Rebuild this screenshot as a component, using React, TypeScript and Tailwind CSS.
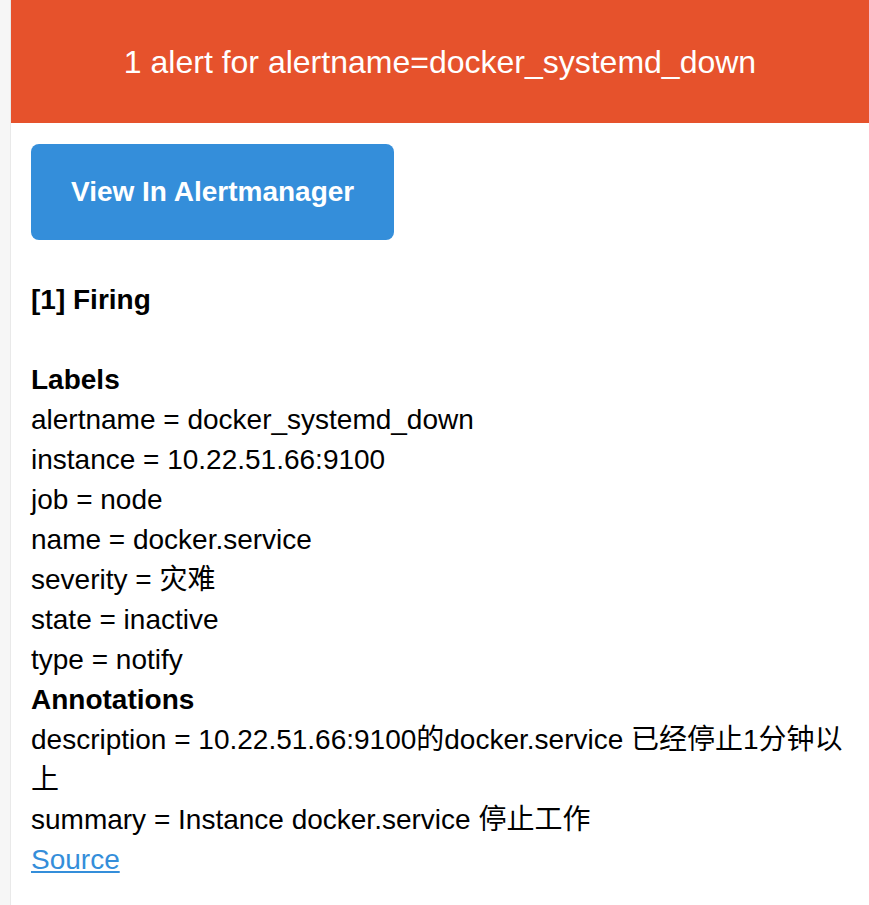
const labels = [
  "alertname = docker_systemd_down",
  "instance = 10.22.51.66:9100",
  "job = node",
  "name = docker.service",
  "severity = 灾难",
  "state = inactive",
  "type = notify",
];

const annotations = [
  "description = 10.22.51.66:9100的docker.service 已经停止1分钟以上",
  "summary = Instance docker.service 停止工作",
];

export default function App() {
  return (
    <div
      className="flex min-h-screen w-full overflow-hidden bg-[#f6f6f6] text-black"
      style={{ fontFamily: '"Liberation Sans", Arial, "Noto Sans CJK SC", sans-serif' }}
    >
      <div className="w-[10px] shrink-0" />
      <div className="flex min-w-0 flex-1 flex-col border-l border-[#e9e9e9] bg-white">
        {/* Header */}
        <div className="flex h-[123px] items-center justify-center bg-[#e6522c] text-[32px] leading-[40px] text-white">
          1 alert for alertname=docker_systemd_down
        </div>

        {/* Body */}
        <div className="px-5 pt-[21px] text-[28px] leading-[40px]">
          <a
            href="#"
            className="inline-block rounded-[8px] bg-[#348eda] px-10 py-5 text-[28px] leading-[56px] font-bold text-white"
          >
            View In Alertmanager
          </a>

          <div className="mt-10">
            <div className="font-bold">[1] Firing</div>
            <div className="h-10" />
            <div className="font-bold">Labels</div>
            {labels.map((l) => (
              <div key={l}>{l}</div>
            ))}
            <div className="font-bold">Annotations</div>
            {annotations.map((a) => (
              <div key={a}>{a}</div>
            ))}
            <a href="#" className="text-[#348eda] underline">
              Source
            </a>
          </div>
        </div>
      </div>
    </div>
  );
}
